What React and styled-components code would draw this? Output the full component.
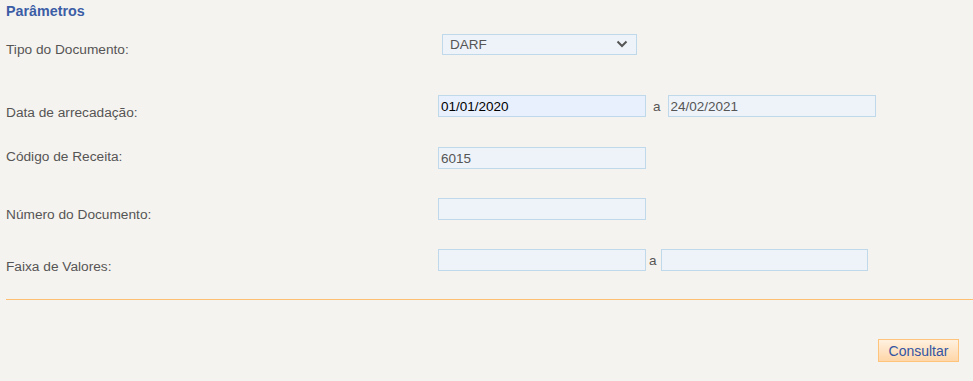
import React from "react";
import styled, { createGlobalStyle } from "styled-components";

const GlobalStyle = createGlobalStyle`
  html, body {
    margin: 0;
    padding: 0;
    background: #f5f3ef;
    font-family: "Liberation Sans", Arial, sans-serif;
  }
`;

const Page = styled.div`
  padding: 3px 0 0 6px;
  height: 378px;
  background: #f5f3ef;
`;

const Title = styled.h3`
  margin: 0;
  font-size: 14.3px;
  line-height: 16px;
  font-weight: bold;
  color: #3b5da6;
`;

const Row = styled.div`
  display: flex;
  margin-top: ${(p) => p.$top}px;
  height: 22px;
`;

const Label = styled.label`
  flex: 0 0 432px;
  padding-top: ${(p) => p.$offset}px;
  font-size: 13.7px;
  line-height: 16px;
  height: 16px;
  color: #555;
  white-space: nowrap;
`;

const Controls = styled.div`
  display: flex;
  align-items: center;
  height: 22px;
`;

const Input = styled.input`
  box-sizing: border-box;
  width: ${(p) => p.$width || 208}px;
  height: 22px;
  margin: 0;
  padding: 0 2px;
  border: 1px solid #bfd8ea;
  border-radius: 0;
  background: ${(p) => (p.$filled ? "#e8f0fe" : "#eef3f9")};
  color: ${(p) => (p.$filled ? "#000" : "#555")};
  font-family: "Liberation Sans", Arial, sans-serif;
  font-size: 13.5px;
  outline: none;
`;

const Sep = styled.span`
  font-size: 13.5px;
  color: #555;
  padding: ${(p) => p.$pad};
  line-height: 16px;
  margin-top: 2px;
`;

const Select = styled.div`
  box-sizing: border-box;
  margin-left: 4px;
  width: 195px;
  height: 21px;
  border: 1px solid #bfd8ea;
  background: #eef3f9;
  display: flex;
  align-items: center;
  justify-content: space-between;
  padding: 0 8px 0 7px;
  font-size: 13.5px;
  color: #555;
`;

const Divider = styled.div`
  margin-top: 28px;
  border-top: 1px solid #ffbf73;
  height: 0;
`;

const Footer = styled.div`
  display: flex;
  justify-content: flex-end;
  padding: 39px 14px 0 0;
`;

const Button = styled.button`
  box-sizing: border-box;
  width: 81px;
  height: 23px;
  border: 1px solid #ffc47c;
  background: linear-gradient(#fff1e0, #ffd6a8);
  color: #3355a3;
  font-family: "Liberation Sans", Arial, sans-serif;
  font-size: 14px;
  padding: 0;
  cursor: pointer;
`;

export default function App() {
  return (
    <Page>
      <GlobalStyle />
      <Title>Parâmetros</Title>

      <Row $top={14}>
        <Label $offset={9}>Tipo do Documento:</Label>
        <Controls>
          <Select>
            <span>DARF</span>
            <svg width="12" height="8" viewBox="0 0 12 8">
              <path d="M1.5 1.5 L6 6 L10.5 1.5" fill="none" stroke="#555" strokeWidth="2" />
            </svg>
          </Select>
        </Controls>
      </Row>

      <Row $top={40}>
        <Label $offset={10}>Data de arrecadação:</Label>
        <Controls>
          <Input $filled defaultValue="01/01/2020" />
          <Sep $pad="0 7px 0 7px">a</Sep>
          <Input defaultValue="24/02/2021" />
        </Controls>
      </Row>

      <Row $top={30}>
        <Label $offset={2}>Código de Receita:</Label>
        <Controls>
          <Input defaultValue="6015" />
        </Controls>
      </Row>

      <Row $top={29}>
        <Label $offset={9}>Número do Documento:</Label>
        <Controls>
          <Input />
        </Controls>
      </Row>

      <Row $top={29}>
        <Label $offset={10}>Faixa de Valores:</Label>
        <Controls>
          <Input />
          <Sep $pad="0 4px 0 3px">a</Sep>
          <Input $width={207} />
        </Controls>
      </Row>

      <Divider />
      <Footer>
        <Button>Consultar</Button>
      </Footer>
    </Page>
  );
}
